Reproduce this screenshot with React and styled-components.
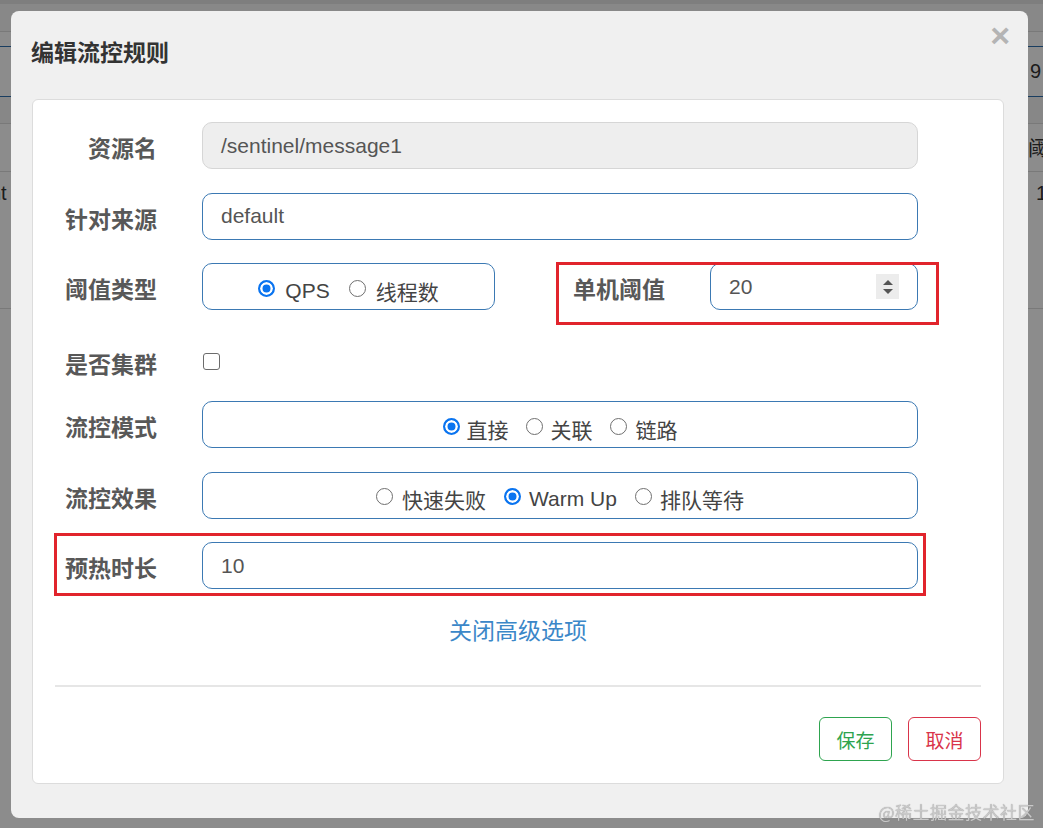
import React from 'react';
import styled, { createGlobalStyle } from 'styled-components';

const GlobalStyle = createGlobalStyle`
  html, body {
    margin: 0;
    padding: 0;
    height: 100%;
  }
  body {
    font-family: 'Liberation Sans', 'Noto Sans CJK SC', sans-serif;
    color: #333;
    background: #fff;
    overflow: hidden;
  }
`;

/* ---------- page behind the dialog ---------- */

const Page = styled.div`
  width: 100%;
  height: 100vh;
  overflow: hidden;
  display: flex;
  flex-direction: column;
`;

const TopBar = styled.div`
  height: 4px;
  background: #e6e6e6;
`;

const PageStrip = styled.div`
  height: ${(p) => p.$h}px;
  flex-shrink: 0;
  display: flex;
  align-items: ${(p) => p.$align || 'center'};
  justify-content: space-between;
  box-sizing: border-box;
  padding-top: ${(p) => p.$pt || 0}px;
  background: ${(p) => p.$bg || '#fff'};
  border-bottom: 1px solid ${(p) => p.$line || '#ddd'};
  font-size: 20px;
  color: #333;
  span {
    white-space: nowrap;
  }
  .left {
    margin-left: -10px;
  }
  .right {
    margin-right: ${(p) => p.$mr ?? -5}px;
  }
`;

const Overlay = styled.div`
  position: fixed;
  inset: 0;
  background: rgba(0, 0, 0, 0.45);
  display: flex;
  align-items: flex-start;
`;

/* ---------- dialog ---------- */

const Modal = styled.div`
  margin: 11px 0 0 11px;
  width: 1017px;
  height: 807px;
  box-sizing: border-box;
  background: #f0f0f0;
  border-radius: 8px;
  display: flex;
  flex-direction: column;
`;

const Header = styled.div`
  height: 88px;
  flex-shrink: 0;
  display: flex;
  justify-content: space-between;
  align-items: flex-start;
  padding: 0 18px 0 20px;
`;

const Title = styled.h4`
  margin: 24px 0 0;
  font-family: 'Noto Sans CJK SC', sans-serif;
  font-size: 23px;
  line-height: 32px;
  font-weight: 700;
  color: #333;
`;

const Close = styled.span`
  margin-top: 7px;
  font-family: 'Liberation Sans', sans-serif;
  font-size: 34px;
  line-height: 34px;
  font-weight: 700;
  color: #b4b4b4;
`;

const Card = styled.div`
  margin: 0 24px 0 21px;
  height: 685px;
  box-sizing: border-box;
  background: #fff;
  border: 1px solid #dcdcdc;
  border-radius: 6px;
  padding: 22px;
  display: flex;
  flex-direction: column;
`;

const Form = styled.div`
  display: flex;
  flex-direction: column;
  gap: 23.5px;
`;

const Row = styled.div`
  position: relative;
  display: flex;
  align-items: center;
  height: ${(p) => p.$h || 47}px;
  box-sizing: border-box;
  padding-top: ${(p) => p.$pt || 0}px;
  margin-right: 63px;
`;

const Label = styled.label`
  flex-shrink: 0;
  width: ${(p) => p.$w || 102}px;
  margin-right: 45px;
  padding-top: 3px;
  text-align: right;
  font-family: 'Noto Sans CJK SC', sans-serif;
  font-size: 23px;
  font-weight: 700;
  color: #585858;
  white-space: nowrap;
`;

const Input = styled.div`
  flex: 1;
  height: 47px;
  box-sizing: border-box;
  display: flex;
  align-items: center;
  justify-content: space-between;
  padding: 0 18px;
  border: 1px solid ${(p) => (p.$disabled ? '#d6d6d6' : '#3b79b3')};
  background: ${(p) => (p.$disabled ? '#eeeeee' : '#fff')};
  border-radius: 10px;
  font-size: 21px;
  color: #555;
`;

const Spinner = styled.span`
  width: 23px;
  height: 25px;
  background: #ececec;
  display: flex;
  flex-direction: column;
  align-items: center;
  justify-content: center;
  gap: 4px;
  i {
    width: 0;
    height: 0;
    border-left: 5px solid transparent;
    border-right: 5px solid transparent;
  }
  .up {
    border-bottom: 5px solid #555;
  }
  .down {
    border-top: 5px solid #555;
  }
`;

const RadioBox = styled.div`
  flex: ${(p) => (p.$w ? '0 0 auto' : 1)};
  width: ${(p) => (p.$w ? `${p.$w}px` : 'auto')};
  height: 47px;
  box-sizing: border-box;
  border: 1px solid #3b79b3;
  border-radius: 10px;
  display: flex;
  align-items: center;
  justify-content: center;
  gap: ${(p) => p.$gap || 18}px;
  padding-top: 8px;
`;

const RadioItem = styled.span`
  display: inline-flex;
  align-items: center;
  gap: ${(p) => p.$gap || 9}px;
  font-family: 'Liberation Sans', 'Noto Sans CJK SC', sans-serif;
  font-size: 21px;
  color: #444;
`;

const Dot = styled.span`
  width: 17px;
  height: 17px;
  box-sizing: border-box;
  border-radius: 50%;
  flex-shrink: 0;
  margin-top: -5px;
  border: ${(p) => (p.$on ? '2px solid #0a74f0' : '1px solid #6f6f6f')};
  background: ${(p) => (p.$on ? '#0a74f0' : '#fff')};
  box-shadow: ${(p) => (p.$on ? 'inset 0 0 0 2.5px #fff' : 'none')};
`;

const Check = styled.span`
  width: 17px;
  height: 17px;
  box-sizing: border-box;
  border: 1px solid #6c6c6c;
  border-radius: 3px;
  margin-left: 1px;
  background: #fff;
`;

const Highlight = styled.div`
  position: relative;
  display: flex;
  align-items: center;
  flex: 1;
  margin-left: 77px;
  &::after {
    content: '';
    position: absolute;
    top: -1px;
    right: -21px;
    bottom: -15px;
    left: -16px;
    border: 3px solid #e1242c;
    pointer-events: none;
  }
`;

const MarkedRow = styled(Row)`
  &::after {
    content: '';
    position: absolute;
    top: -9px;
    right: -8px;
    bottom: -7px;
    left: -1px;
    border: 3px solid #e1242c;
    pointer-events: none;
  }
`;

const Toggle = styled.a`
  align-self: center;
  font-family: 'Noto Sans CJK SC', sans-serif;
  font-size: 23px;
  line-height: 32px;
  color: #3b87c8;
  text-decoration: none;
  cursor: pointer;
`;

const Divider = styled.hr`
  margin: 40px 0 0;
  border: 0;
  border-top: 2px solid #e6e6e6;
`;

const Footer = styled.div`
  margin-top: auto;
  display: flex;
  justify-content: flex-end;
  gap: 16px;
`;

const Button = styled.button`
  width: 73px;
  height: 44px;
  border-radius: 6px;
  background: #fff;
  border: 1px solid ${(p) => p.$color};
  color: ${(p) => p.$color};
  font-family: 'Noto Sans CJK SC', sans-serif;
  font-size: 19px;
  padding: 0;
  cursor: pointer;
`;

const Watermark = styled.div`
  position: fixed;
  right: 8px;
  bottom: 4px;
  font-family: 'Noto Sans CJK SC', sans-serif;
  font-size: 17px;
  color: #c9c9c9;
  text-shadow: 0 0 1px #8a8a8a;
  letter-spacing: 0.5px;
`;

function Radio({ on, children, gap }) {
  return (
    <RadioItem $gap={gap}>
      <Dot $on={on} />
      {children}
    </RadioItem>
  );
}

export default function App() {
  return (
    <>
      <GlobalStyle />
      <Page>
        <TopBar />
        <PageStrip $h={28} $bg="#f7f7f7" />
        <PageStrip $h={15} $line="#2f6fb0" />
        <PageStrip $h={50} $line="#2f6fb0" $mr={2}>
          <span />
          <span className="right">9</span>
        </PageStrip>
        <PageStrip $h={27} $bg="#f6f6f6" />
        <PageStrip $h={48} $mr={-5}>
          <span />
          <span className="right">阈</span>
        </PageStrip>
        <PageStrip $h={137} $align="flex-start" $pt={10} $mr={-4}>
          <span className="left">nt</span>
          <span className="right">1</span>
        </PageStrip>
      </Page>

      <Overlay>
        <Modal>
          <Header>
            <Title>编辑流控规则</Title>
            <Close>×</Close>
          </Header>
          <Card>
            <Form>
              <Row>
                <Label>资源名</Label>
                <Input $disabled>/sentinel/message1</Input>
              </Row>
              <Row>
                <Label>针对来源</Label>
                <Input>default</Input>
              </Row>
              <Row>
                <Label>阈值类型</Label>
                <RadioBox $w={293} $gap={19}>
                  <Radio on gap={10}>QPS</Radio>
                  <Radio gap={10}>线程数</Radio>
                </RadioBox>
                <Highlight>
                  <Label $w={93}>单机阈值</Label>
                  <Input>
                    20
                    <Spinner>
                      <i className="up" />
                      <i className="down" />
                    </Spinner>
                  </Input>
                </Highlight>
              </Row>
              <Row $h={44} $pt={11}>
                <Label>是否集群</Label>
                <Check />
              </Row>
              <Row>
                <Label>流控模式</Label>
                <RadioBox $gap={17}>
                  <Radio on gap={7}>直接</Radio>
                  <Radio gap={8}>关联</Radio>
                  <Radio gap={9}>链路</Radio>
                </RadioBox>
              </Row>
              <Row>
                <Label>流控效果</Label>
                <RadioBox $gap={18}>
                  <Radio gap={9}>快速失败</Radio>
                  <Radio on gap={8}>Warm Up</Radio>
                  <Radio gap={8}>排队等待</Radio>
                </RadioBox>
              </Row>
              <MarkedRow>
                <Label>预热时长</Label>
                <Input>10</Input>
              </MarkedRow>
              <Toggle>关闭高级选项</Toggle>
            </Form>
            <Divider />
            <Footer>
              <Button $color="#2ea44f">保存</Button>
              <Button $color="#d9344a">取消</Button>
            </Footer>
          </Card>
        </Modal>
      </Overlay>
      <Watermark>@稀土掘金技术社区</Watermark>
    </>
  );
}
